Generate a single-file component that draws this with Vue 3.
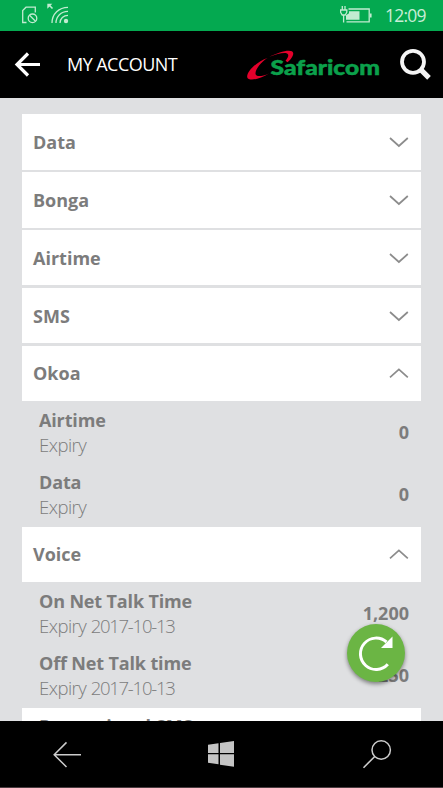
<template>
  <div class="phone">
    <div class="status">
      <svg class="status-left" width="56" height="31" viewBox="0 0 56 31">
        <g fill="none" stroke="#c2ebd1" stroke-width="1.3">
          <path d="M6.500 22.500H2.700V10.500L6 7.200H15.300V12.500" />
          <circle cx="12.500" cy="18.300" r="4.300" />
          <path d="M9.500 15.300l6 6" />
          <path d="M32 23C32 14 39 7.300 48 7.300M36 23C36 16.500 41 11.300 48 11.300M40 23C40 18.500 43.500 15.300 48 15.300" />
          <path d="M32.500 8.500l-4-4" stroke-width="1.600" />
        </g>
        <path d="M27.300 3.700h5l-5 5z" fill="#c2ebd1" />
        <circle cx="46" cy="21" r="2.200" fill="#c2ebd1" />
      </svg>
      <svg class="battery" width="34" height="31" viewBox="0 0 34 31">
        <g fill="none" stroke="#c2ebd1" stroke-width="1.3">
          <path d="M8.500 9H29.200V21.800H6.500M3.600 15v7.500M2.300 6v4M5 6v4M.6 10h6.200v2.200L5.200 15H2.200L.6 12.200z" />
        </g>
        <path d="M9 11.200h10.500v8.500H6v-4.500l3-2z" fill="#c2ebd1" />
        <path d="M30 13.400h1.600v4H30z" fill="#c2ebd1" />
      </svg>
      <span class="clock">12:09</span>
    </div>

    <header class="header">
      <svg class="header-back" width="28" height="28" viewBox="0 0 28 28">
        <path d="M26 13.500H3.500M14 2.500L3 13.500l11 11" fill="none" stroke="#fff" stroke-width="3.200" />
      </svg>
      <h1 class="title">MY ACCOUNT</h1>
      <svg class="logo" width="136" height="34" viewBox="0 0 136 34">
        <path d="M20.500 10C8 14.500-1 24.500.3 29.500c1.200 3.600 11.500 2.500 21.700-4-8 3.500-13.200 3.200-13.500.2C8.300 21.500 14 14 20.500 10z" fill="#e4002b" />
        <path d="M22.500 8.800C31 4.500 41 1.300 45 3.300c3 2 .2 7-4.500 11l-2-1.500c2.500-3 4-6 1.500-7.300-3-1.200-10 .3-17.500 3.300z" fill="#e4002b" />
        <text class="logo-text" x="23.500" y="26.500" textLength="109.500" lengthAdjust="spacingAndGlyphs">Safaricom</text>
      </svg>
      <svg class="header-search" width="34" height="34" viewBox="0 0 34 34">
        <circle cx="14" cy="13.800" r="11" fill="none" stroke="#f4f4f4" stroke-width="3.800" />
        <path d="M21.500 21.300l8.500 8.500" stroke="#f4f4f4" stroke-width="5.200" />
      </svg>
    </header>

    <main class="content">
      <section v-for="group in groups" :key="group.name" class="group">
        <div class="group-head" :class="{ indent: group.indent }">
          <span>{{ group.name }}</span>
          <svg v-if="!group.indent" width="20" height="12" viewBox="0 0 20 12">
            <path :d="group.items ? 'M1 10.300L9.900 2.300l8.900 8' : 'M1 2l8.900 8L18.800 2'" fill="none" stroke="#8c8c8c" stroke-width="1.700" />
          </svg>
        </div>
        <div v-if="group.items" class="group-body">
          <div v-for="item in group.items" :key="item.name" class="item">
            <div>
              <div class="item-name">{{ item.name }}</div>
              <div class="item-expiry">Expiry <span v-if="item.expiry" class="date">{{ item.expiry }}</span></div>
            </div>
            <span class="item-value">{{ item.value }}</span>
          </div>
        </div>
      </section>
    </main>

    <button class="refresh" aria-label="Refresh">
      <svg width="58" height="58" viewBox="0 0 58 58">
        <path d="M40.800 40.300A15.700 15.700 0 1 1 39.500 18" fill="none" stroke="#fff" stroke-width="3" />
        <path d="M45.500 12.500V24H34z" fill="#fff" />
      </svg>
    </button>

    <nav class="nav">
      <svg width="30" height="30" viewBox="0 0 30 30">
        <path d="M29 15.700H2.500M14.500 3.400L2.200 15.700l12.300 12.300" fill="none" stroke="#ccc" stroke-width="1.500" />
      </svg>
      <svg width="28" height="28" viewBox="0 0 28 28">
        <path d="M0 4.700l10.500-1.500v9.800H0zM12 3L26 1v12H12zM0 14.300h10.500v10L0 22.800zM12 14.300h14v12.500l-14-2z" fill="#c4c4c4" />
      </svg>
      <svg width="30" height="30" viewBox="0 0 30 30">
        <path d="M12.500 17.700L1.500 28.700" stroke="#ccc" stroke-width="1.600" />
        <circle cx="19.200" cy="11" r="9.200" fill="none" stroke="#ccc" stroke-width="1.500" />
      </svg>
    </nav>
  </div>
</template>

<script setup>
const groups = [
  { name: 'Data' },
  { name: 'Bonga' },
  { name: 'Airtime' },
  { name: 'SMS' },
  {
    name: 'Okoa',
    items: [
      { name: 'Airtime', value: '0' },
      { name: 'Data', value: '0' },
    ],
  },
  {
    name: 'Voice',
    items: [
      { name: 'On Net Talk Time', expiry: '2017-10-13', value: '1,200' },
      { name: 'Off Net Talk time', expiry: '2017-10-13', value: '250' },
    ],
  },
  { name: 'Promotional SMS', indent: true },
]
</script>

<style>
body {
  margin: 0;
  overflow: hidden;
}
</style>

<style scoped>
.phone {
  position: relative;
  display: flex;
  flex-direction: column;
  width: 443px;
  height: 788px;
  overflow: hidden;
  background: #dfe0e2;
  color: #7c7c7c;
  font-family: 'Open Sans', 'Noto Sans', sans-serif;
}

.status {
  display: flex;
  flex: none;
  align-items: center;
  height: 31px;
  background: #04a950;
}

.status-left {
  margin-left: 20px;
}

.battery {
  margin-left: auto;
}

.clock {
  width: 40px;
  margin: 0 18px 0 11px;
  padding-bottom: 2px;
  color: #c8edd6;
  font-size: 17.5px;
  letter-spacing: -0.8px;
  white-space: nowrap;
}

.header {
  display: flex;
  flex: none;
  align-items: center;
  height: 67px;
  background: #000;
}

.header-back {
  margin-left: 14px;
}

.title {
  width: 112px;
  margin: 0 auto 0 25px;
  padding-bottom: 2px;
  color: #fff;
  font-size: 18px;
  font-weight: 400;
  letter-spacing: -0.55px;
  white-space: nowrap;
}

.logo {
  margin: 0 16px 0 0;
}

.logo-text {
  fill: #0ba04b;
  stroke: #0ba04b;
  stroke-width: 0.5px;
  font-family: Lato, sans-serif;
  font-size: 21.5px;
  font-weight: 900;
}

.header-search {
  margin-right: 10px;
}

.content {
  flex: 1;
  min-height: 0;
  padding: 16.4px 22px 0;
  overflow: hidden;
}

.group-head {
  display: flex;
  align-items: center;
  justify-content: space-between;
  height: 55.5px;
  margin-bottom: 2.3px;
  padding: 0 12px 0 11px;
  box-sizing: border-box;
  background: #fff;
  font-size: 18px;
  font-weight: 700;
}

.group-head.indent {
  align-items: flex-start;
  padding-top: 6px;
  padding-left: 17px;
  line-height: 25px;
}

.group-body {
  padding: 0 12px 0 17px;
}

.item {
  display: flex;
  align-items: center;
  justify-content: space-between;
  height: 61.6px;
  padding-bottom: 2px;
  box-sizing: border-box;
}

.item-name {
  font-size: 18px;
  font-weight: 700;
  letter-spacing: -0.15px;
  line-height: 25px;
}

.item-expiry {
  margin-top: -1px;
  padding-bottom: 1px;
  font-size: 18.5px;
  font-weight: 300;
  letter-spacing: -0.5px;
  line-height: 25px;
}

.date {
  letter-spacing: -1.25px;
}

.item-value {
  padding-bottom: 2px;
  font-size: 18px;
  font-weight: 700;
}

.refresh {
  position: absolute;
  top: 624px;
  left: 347px;
  width: 58px;
  height: 58px;
  padding: 0;
  border: 0;
  border-radius: 50%;
  background: #6bb544;
  box-shadow: 0 2px 4px rgba(0, 0, 0, 0.45);
}

.nav {
  display: flex;
  flex: none;
  align-items: center;
  justify-content: space-between;
  height: 67px;
  padding: 0 51px 0 52px;
  box-sizing: border-box;
  border-bottom: 1px solid #4a3c40;
  background: #000;
}
</style>
